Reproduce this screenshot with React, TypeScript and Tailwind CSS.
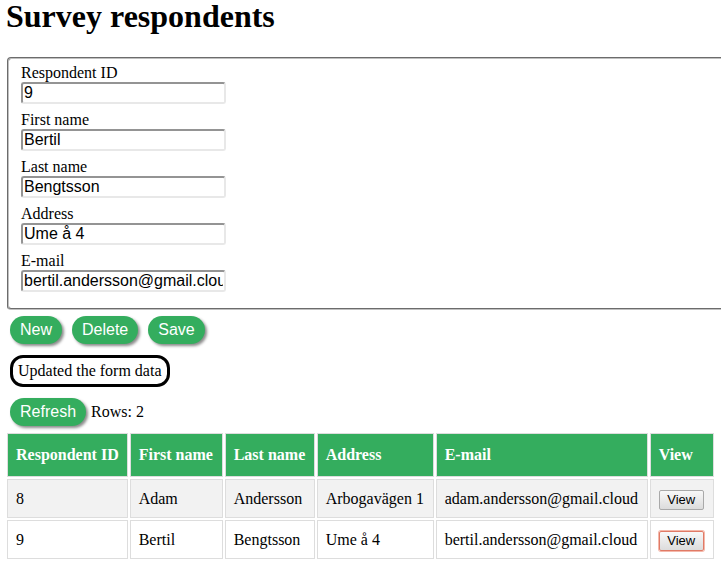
import React from 'react';

const serif = { fontFamily: '"Liberation Serif", "Times New Roman", serif' };

const fields = [
  { label: 'Respondent ID', value: '9' },
  { label: 'First name', value: 'Bertil' },
  { label: 'Last name', value: 'Bengtsson' },
  { label: 'Address', value: 'Ume å 4' },
  { label: 'E-mail', value: 'bertil.andersson@gmail.cloud' },
];

const rows = [
  { id: '8', first: 'Adam', last: 'Andersson', address: 'Arbogavägen 1', email: 'adam.andersson@gmail.cloud' },
  { id: '9', first: 'Bertil', last: 'Bengtsson', address: 'Ume å 4', email: 'bertil.andersson@gmail.cloud' },
];

const headers = [
  { label: 'Respondent ID', w: 'w-[120px]' },
  { label: 'First name', w: 'w-[93px]' },
  { label: 'Last name', w: 'w-[90px]' },
  { label: 'Address', w: 'w-[117px]' },
  { label: 'E-mail', w: 'w-[212px]' },
  { label: 'View', w: 'w-[64px]' },
];

function GreenButton({ children }: { children: React.ReactNode }) {
  return (
    <button className="h-[28px] px-[10px] rounded-[14px] bg-[#34ad5e] text-white text-[16px] leading-[18px] font-['Liberation_Sans',Arial,sans-serif] shadow-[2px_2px_3px_#8a8a8a]">
      {children}
    </button>
  );
}

export default function App() {
  return (
    <div className="w-[721px] h-[567px] overflow-hidden bg-white text-black text-[16px]" style={serif}>
      <h1 className="m-0 pl-[6px] text-[32px] leading-[36px] -mt-[2px] font-bold">Survey respondents</h1>

      <div className="ml-[7px] mt-[23px] w-[740px] border-2 [border-style:groove] border-[#c0c0c0] rounded-[4px] pl-3 pt-[5px] pb-[16px]">
        {fields.map((f, i) => (
          <div key={f.label} className={i > 0 ? 'mt-[7px]' : ''}>
            <label className="block leading-[18px]">{f.label}</label>
            <input
              readOnly
              value={f.value}
              className="block w-[205px] h-[22px] px-[1px] border-2 [border-style:inset] border-[#e8e8e8] rounded-[3px] text-[16px] leading-[18px] outline-none font-['Liberation_Sans',Arial,sans-serif]"
            />
          </div>
        ))}
      </div>

      <div className="flex gap-[10px] ml-[10px] mt-[6px]">
        <GreenButton>New</GreenButton>
        <GreenButton>Delete</GreenButton>
        <GreenButton>Save</GreenButton>
      </div>

      <div className="ml-[10px] mt-[11px] inline-block border-[3px] border-black rounded-[13px] px-[5px] h-[32px] leading-[26px]">
        Updated the form data
      </div>

      <div className="flex items-center gap-[5px] ml-[10px] mt-[11px]">
        <GreenButton>Refresh</GreenButton>
        <span>Rows: 2</span>
      </div>

      <table className="ml-[5px] mt-[5px] border-separate border-spacing-[2px]">
        <thead>
          <tr className="bg-[#34ad5e] text-white">
            {headers.map((h) => (
              <th key={h.label} className={h.w + ' h-[44px] px-2 text-left font-bold whitespace-nowrap border border-[#dddddd]'}>
                {h.label}
              </th>
            ))}
          </tr>
        </thead>
        <tbody>
          {rows.map((r, i) => (
            <tr key={r.id} className={i === 0 ? 'bg-[#f2f2f2]' : 'bg-white'}>
              <td className="h-[39px] px-2 border border-[#dddddd]">{r.id}</td>
              <td className="h-[39px] px-2 border border-[#dddddd]">{r.first}</td>
              <td className="h-[39px] px-2 border border-[#dddddd]">{r.last}</td>
              <td className="h-[39px] px-2 border border-[#dddddd] whitespace-nowrap">{r.address}</td>
              <td className="h-[39px] px-2 border border-[#dddddd] whitespace-nowrap">{r.email}</td>
              <td className="h-[39px] px-2 border border-[#dddddd]">
                <button
                  className={
                    'h-[20px] w-[45px] rounded-[2px] bg-gradient-to-b from-[#f8f8f8] to-[#dcdcdc] text-[13px] leading-[16px] text-black font-["Liberation_Sans",Arial,sans-serif] ' +
                    (i === 1
                      ? 'border border-[#e07a66] shadow-[0_0_0_1px_#f4b8aa]'
                      : 'border border-[#a9a9a9]')
                  }
                >
                  View
                </button>
              </td>
            </tr>
          ))}
        </tbody>
      </table>
    </div>
  );
}
